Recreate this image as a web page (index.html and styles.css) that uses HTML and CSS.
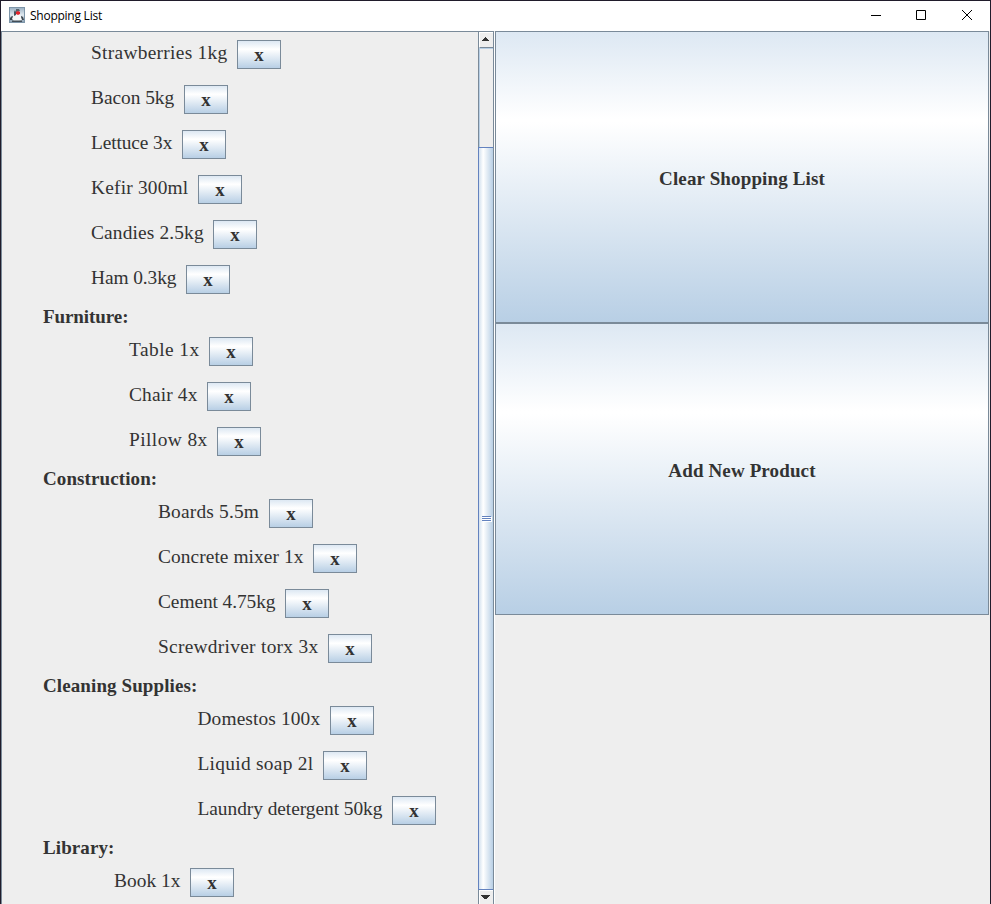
FILE: index.html
```html
<!DOCTYPE html>
<html lang="en">
<head>
<meta charset="utf-8">
<title>Shopping List</title>
<link rel="stylesheet" href="styles.css">
</head>
<body>
<div class="window">
  <header class="titlebar">
    <svg class="app-icon" width="16" height="16" viewBox="0 0 16 16">
      <defs><linearGradient id="ib" x1="0" y1="0" x2="0" y2="1"><stop offset="0" stop-color="#9fb4c6"/><stop offset=".5" stop-color="#dfe8ef"/><stop offset="1" stop-color="#8ba0b2"/></linearGradient></defs>
      <rect width="16" height="16" fill="#7d95a9"/><rect x="1" y="1" width="14" height="14" fill="url(#ib)"/>
      <path d="M7 2h3l1 2-4 1z" fill="#59636c"/>
      <path d="M1 11l2-2 2 1-1 3H1zM12 9l2 1 1 3-3 0z" fill="#3c464f"/>
      <path d="M5 7h6l1 3 1 3-3 1H5l-2-2z" fill="#f6f7f8"/>
      <path d="M6 3l1 2 0 3-2 1V5z" fill="#49535c"/>
      <path d="M3 13.500h10v1.500H3z" fill="#434e58"/>
      <path d="M7 5l2-1 2 1v2L9 8 7 7z" fill="#e3232b"/>
    </svg>
    <span class="title">Shopping List</span>
    <svg class="controls" width="119" height="31" viewBox="0 0 119 31" fill="none" stroke="#000">
      <path d="M0 15.500h10M45.500 10.500h9v9h-9zM91 10l10 10M101 10l-10 10"/>
    </svg>
  </header>
  <main class="content">
    <section class="list">
      <ul class="food">
        <li><span>Strawberries 1kg</span><button>x</button></li>
        <li><span>Bacon 5kg</span><button>x</button></li>
        <li><span>Lettuce 3x</span><button>x</button></li>
        <li><span>Kefir 300ml</span><button>x</button></li>
        <li><span>Candies 2.5kg</span><button>x</button></li>
        <li><span>Ham 0.3kg</span><button>x</button></li>
      </ul>
      <h2 class="tight">Furniture:</h2>
      <ul class="furniture">
        <li><span>Table 1x</span><button>x</button></li>
        <li><span>Chair 4x</span><button>x</button></li>
        <li><span>Pillow 8x</span><button>x</button></li>
      </ul>
      <h2>Construction:</h2>
      <ul class="construction">
        <li><span>Boards 5.5m</span><button>x</button></li>
        <li><span>Concrete mixer 1x</span><button>x</button></li>
        <li><span>Cement 4.75kg</span><button>x</button></li>
        <li><span>Screwdriver torx 3x</span><button>x</button></li>
      </ul>
      <h2>Cleaning Supplies:</h2>
      <ul class="cleaning">
        <li><span>Domestos 100x</span><button>x</button></li>
        <li><span>Liquid soap 2l</span><button>x</button></li>
        <li><span>Laundry detergent 50kg</span><button>x</button></li>
      </ul>
      <h2>Library:</h2>
      <ul class="library">
        <li><span>Book 1x</span><button>x</button></li>
      </ul>
    </section>
    <div class="scrollbar">
      <div class="arrow up"><svg width="9" height="4" viewBox="0 0 9 4" shape-rendering="crispEdges"><path d="M4 0h1v1h1v1h1v1h1v1H1V3h1V2h1V1h1z" fill="#333"/></svg></div>
      <div class="track"></div>
      <div class="thumb"><i class="grip"></i></div>
      <div class="arrow down"><svg width="9" height="4" viewBox="0 0 9 4" shape-rendering="crispEdges"><path d="M0 0h9v1H8v1H7v1H6v1H3V3H2V2H1V1H0z" fill="#333"/></svg></div>
    </div>
    <aside class="actions">
      <button>Clear Shopping List</button>
      <button>Add New Product</button>
    </aside>
  </main>
</div>
</body>
</html>
```
FILE: styles.css
```css
* { box-sizing: border-box; }
body { margin: 0; background: #eee; overflow: hidden; }
.window {
  width: 991px; height: 904px;
  border: 1px solid #201c2b; border-bottom: 0;
  background: #eee; color: #333;
  font-family: "Liberation Serif", serif;
  display: flex; flex-direction: column;
}
.titlebar { height: 30px; flex: none; background: #fff; display: flex; align-items: center; padding-left: 8px; }
.app-icon { flex: none; margin-top: -2px; }
.title { flex: 1; margin-left: 5px; color: #000; font: 12px/16px "Open Sans", sans-serif; letter-spacing: -0.25px; }
.controls { flex: none; margin-top: -1px; }
.content { flex: 1; min-height: 0; display: flex; }
.list { width: 477px; height: 873px; flex: none; overflow: hidden; border-top: 1px solid #7a8a99; border-left: 1px solid #7a8a99; }
ul { list-style: none; margin: 0; padding: 0; }
li { height: 45px; padding-top: 8px; display: flex; gap: 10px; font-size: 19.4px; }
li span { flex: none; line-height: 26px; white-space: nowrap; }

.food { padding-left: 89px; }
.food li:nth-child(1) span { width: 136px; letter-spacing: 0.29px; }
.food li:nth-child(2) span { width: 83px; letter-spacing: -0.03px; }
.food li:nth-child(3) span { width: 81px; letter-spacing: -0.11px; }
.food li:nth-child(4) span { width: 97px; letter-spacing: 0.19px; }
.food li:nth-child(5) span { width: 112px; letter-spacing: 0.14px; }
.food li:nth-child(6) span { width: 85px; letter-spacing: -0.08px; }

.furniture { padding-left: 127px; }
.furniture li:nth-child(1) span { width: 70px; letter-spacing: 0.45px; }
.furniture li:nth-child(2) span { width: 68px; letter-spacing: 0.15px; }
.furniture li:nth-child(3) span { width: 78px; letter-spacing: 0.42px; }

.construction { padding-left: 156px; }
.construction li:nth-child(1) span { width: 101px; letter-spacing: 0.18px; }
.construction li:nth-child(2) span { width: 145px; letter-spacing: 0.07px; }
.construction li:nth-child(3) span { width: 117px; letter-spacing: -0.08px; }
.construction li:nth-child(4) span { width: 160px; letter-spacing: 0.28px; }

.cleaning { padding-left: 195.500px; }
.cleaning li:nth-child(1) span { width: 122.500px; letter-spacing: 0.12px; }
.cleaning li:nth-child(2) span { width: 115.500px; letter-spacing: 0.28px; }
.cleaning li:nth-child(3) span { width: 184.500px; letter-spacing: -0.05px; }

.library { padding-left: 112px; }
.library li span { width: 66px; letter-spacing: 0.02px; }

h2 { margin: 0; padding-left: 41px; height: 27px; font-size: 19px; line-height: 30px; letter-spacing: 0.1px; }
.tight { letter-spacing: -0.08px; }
button {
  margin: 0; padding: 0; border: 1px solid #7a8a99; border-radius: 0; color: #333;
  font: bold 19px/26px "Liberation Serif", serif;
  background: linear-gradient(#dde8f3 0%, #fff 30%, #fff 31%, #b8cfe5 100%);
}
li button { width: 44px; height: 29px; flex: none; }
.scrollbar {
  width: 16px; height: 873px; flex: none; display: flex; flex-direction: column;
  border: solid #7a8a99; border-width: 1px 1px 0; background: #eee; box-shadow: 1px 1px 0 #fff;
}
.arrow { flex: none; display: flex; background: #eee; border: 1px solid #fff; border-width: 1px 0 0 1px; }
.up { height: 16px; padding: 4px 0 0 1px; border-bottom: 1px solid #7a8a99; }
.down { height: 14px; padding: 4px 0 0 1px; }
.track { height: 99px; flex: none; border: solid #b8cfe5; border-width: 1px 0 0 1px; background: #eee; }
.thumb {
  flex: 1; margin-left: -1px; border: solid #6382bf; border-width: 1px 0 1px 1px;
  background: linear-gradient(90deg, #d3e1ef, #fff 30%, #b8cfe5);
  display: flex; align-items: flex-start; padding: 368px 0 0 3px;
}
.grip {
  width: 9px; height: 5px; box-shadow: 1px 1px 0 #fff;
  background: linear-gradient(#6382bf 0 1px, #fff 1px 2px, #6382bf 2px 3px, #fff 3px 4px, #6382bf 4px 5px);
}
.actions { width: 494px; margin-left: 1px; display: flex; flex-direction: column; }
.actions button { height: 292px; flex: none; padding-top: 4px; letter-spacing: 0.13px; }
```
